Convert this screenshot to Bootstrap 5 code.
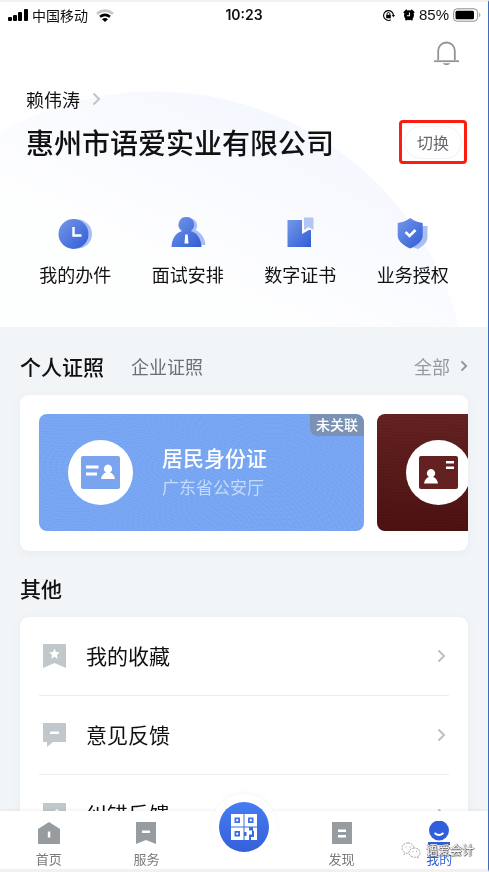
<!DOCTYPE html>
<html lang="zh-CN">
<head>
<meta charset="utf-8">
<meta name="viewport" content="width=device-width, initial-scale=1">
<title>我的</title>
<link href="https://cdn.jsdelivr.net/npm/bootstrap@5.3.0/dist/css/bootstrap.min.css" rel="stylesheet">
<style>
  body { font-family: "Noto Sans CJK SC", "Noto Sans", sans-serif; color: #111; background: #f1f5f8; }
  button { background: none; border: 0; padding: 0; color: inherit; }
  a { color: inherit; text-decoration: none; }
  svg { display: block; flex: none; }
  .shell { border-top: 2px solid #f1f1f1; border-right: 1px solid #3d6fb3; border-bottom: 3px solid #f1f1f1; }
  .scroll-y, .scroll-x { scrollbar-width: none; }
  .scroll-y::-webkit-scrollbar, .scroll-x::-webkit-scrollbar { display: none; }
  .scroll-y { overflow: hidden auto; min-height: 0; }
  .hero { background:
      linear-gradient(205deg, rgba(255,255,255,0) 30%, rgba(255,255,255,.9) 75%),
      radial-gradient(circle 315px at 155px 404px, #f3f6fe 0, #f3f6fe 314px, #fff 315px);
      height: 325px; }
  .status { height: 26px; padding: 0 7px; font-size: 14px; line-height: 26px; }
  .status > * { flex: 1 1 0; }
  .clock { font-family: Inter, sans-serif; font-weight: 600; }
  .percent { font-family: "Liberation Sans", sans-serif; font-size: 15px; }
  .bell-row { height: 48px; padding: 8px 28px 0; }
  .bell-row button { height: 36px; }
  .person { font-size: 18px; line-height: 26px; margin: 10px 26px 0; gap: 12px; }
  .company-row { margin: 8px 21px 0 26px; height: 44px; }
  .company { font-size: 28px; line-height: 40px; font-weight: 500; white-space: nowrap; }
  .frame-red { border: 3px solid #fb1d10; border-radius: 4px; padding: 3px 2px 2px; background: #fff; }
  .pill { width: 58px; height: 33px; border: 1px solid #f1f1f3; border-radius: 17px; font-size: 16px; line-height: 31px; color: #666a70; }
  .actions { margin: 52px 19px 0; font-size: 18px; line-height: 24px; }
  .actions a { gap: 10px; }
  .heading { font-size: 21px; line-height: 30px; font-weight: 500; }
  .tabs { padding: 24px 20px 14px; gap: 27px; }
  .tabs .quiet { font-size: 18px; line-height: 30px; color: #6a6f76; }
  .tabs .pale { color: #989b9e; gap: 10px; }
  .panel { margin: 0 20px; background: #fff; border-radius: 9px; box-shadow: 0 2px 10px rgba(60,80,110,.06); }
  .certs { padding: 19px 0 20px 19px; gap: 13px; overflow: auto hidden; }
  .cert { width: 325px; height: 117px; border-radius: 8px; padding-left: 29px; gap: 29px; flex: none; color: #fff; overflow: hidden; }
  .cert-blue { background:
      repeating-radial-gradient(ellipse at 72% 45%, rgba(60,110,220,.07) 0 1px, transparent 2px 6px),
      repeating-radial-gradient(ellipse at 10% 130%, rgba(60,110,220,.07) 0 1px, transparent 2px 5px), #7aa8f3; }
  .cert-red { background:
      repeating-linear-gradient(2deg, rgba(0,0,0,.05) 0 1px, transparent 1px 3px), linear-gradient(#652222, #4d1111); }
  .disc { width: 65px; height: 65px; border-radius: 50%; background: #fff; flex: none; }
  .cert-name { font-size: 21px; line-height: 28px; font-weight: 500; }
  .cert-org { font-size: 17px; line-height: 32px; color: #c6dbfb; }
  .flag { top: 0; right: 0; width: 54px; height: 22px; border-radius: 0 8px 0 8px; background: #7b92b4; font-size: 14px; line-height: 21px; font-weight: 500; }
  .other { padding: 22px 20px 14px; }
  .menu { padding: 0 19px; border-radius: 9px; }
  .menu a { font-size: 21px; line-height: 30px; height: 79px; border-bottom: 1px solid #ececee; padding: 0 3px 0 4px; gap: 20px; }
  .menu span { padding-bottom: 3px; }
  .menu li:last-child a { border-bottom: 0; }
  .tabbar { height: 58px; background: #fff; box-shadow: 0 -1px 4px rgba(0,0,0,.06); font-size: 13px; line-height: 18px; color: #777b7e; }
  .tabbar > a { flex: 1 1 0; gap: 5px; padding-top: 10px; }
  .tabbar .on { color: #2f5fd9; }
  .tabbar .scan { padding: 0; margin-top: -17px; }
  .halo { width: 66px; height: 66px; border-radius: 50%; background: #fff; box-shadow: 0 -2px 4px rgba(0,0,0,.03); }
  .scan-disc { width: 50px; height: 50px; border-radius: 50%; background: linear-gradient(#467df2, #3460d8); }
  .stamp { right: 14px; bottom: 9px; gap: 5px; font-size: 12px; line-height: 20px; color: #fff; pointer-events: none;
      text-shadow: 0 0 1px #555, 1px 0 1px #555, 0 1px 1px #666; }
</style>
<script src="https://cdn.jsdelivr.net/npm/bootstrap@5.3.0/dist/js/bootstrap.bundle.min.js"></script>
</head>
<body>
<div class="shell vh-100 d-flex flex-column position-relative overflow-hidden">
  <main class="scroll-y flex-fill">
    <header class="hero">
      <div class="status d-flex">
        <div class="d-flex align-items-center">
          <svg width="21" height="12" viewBox="0 0 21 12"><rect x="1" y="8" width="4" height="4" rx="1"/><rect x="6" y="6" width="4" height="6" rx="1"/><rect x="11" y="3" width="4" height="9" rx="1"/><rect x="17" y="0" width="4" height="12" rx="1"/></svg>
          <span class="ms-1">中国移动</span>
          <svg class="ms-2" width="18" height="13" viewBox="0 0 18 13" fill="none"><path d="M1 4.800Q9-1.500 17 4.800" stroke="#c5c5c7" stroke-width="2.600"/><path d="M4 7.800q5-3.800 10 0" stroke="#000" stroke-width="2.600"/><path d="M6 10.200q3-2.300 6 0l-3 2.800z" fill="#000"/></svg>
        </div>
        <div class="clock text-center">10:23</div>
        <div class="d-flex align-items-center justify-content-end">
          <svg width="13" height="13" viewBox="0 0 14 14" fill="none" stroke="#000"><path d="M12.300 7A5.300 5.300 0 1 0 9.500 11.700" stroke-width="1.200"/><path d="M10.500 6.500h3.500l-1.700 2.500z" fill="#000" stroke="none"/><rect x="4.500" y="6.300" width="5" height="3.700" fill="#000" stroke="none"/><path d="M5.500 6.500V5.300a1.500 1.500 0 0 1 3 0v1.200"/></svg>
          <svg class="ms-2" width="12" height="12" viewBox="0 0 14 14"><circle cx="7" cy="7.300" r="5.800"/><path d="M1 4.500 4.500 1M9.500 1 13 4.500M3 13l2-2M11 13l-2-2" stroke="#000" stroke-width="2"/><path d="M7.500 4v4h-3" stroke="#fff" fill="none" stroke-width="1.200"/></svg>
          <span class="percent ms-1">85%</span>
          <svg class="ms-1" width="28" height="14" viewBox="0 0 28 14"><rect x=".6" y=".8" width="24" height="12.400" rx="3.500" fill="#fff" stroke="#8d8d8f"/><rect x="2.500" y="2.700" width="18.500" height="8.600" rx="1.500"/><path d="M26.300 4.500q2 2.500 0 5z" fill="#8d8d8f"/></svg>
        </div>
      </div>
      <div class="bell-row d-flex justify-content-end">
        <button type="button" aria-label="通知"><svg width="27" height="26" viewBox="0 0 27 26" fill="none" stroke="#8f9498"><path d="M5.200 19V9.800a8.300 8.300 0 0 1 16.600 0V19" stroke-width="1.800"/><path d="M1 20.200h25" stroke-width="1.800"/><path d="M9.500 22.300h8q-4 4-8 0z" fill="#8f9498" stroke="none"/></svg></button>
      </div>
      <a href="#" class="person d-flex align-items-center">赖伟涛
        <svg width="9" height="14" viewBox="0 0 9 14" fill="none" stroke="#c0c5c9" stroke-width="2"><path d="m1.500 1.500 5.500 5.500-5.500 5.500"/></svg></a>
      <div class="company-row d-flex align-items-center justify-content-between">
        <h1 class="company m-0">惠州市语爱实业有限公司</h1>
        <div class="frame-red"><button type="button" class="pill d-block">切换</button></div>
      </div>
      <nav class="actions row g-0 text-center">
        <a href="#" class="col-3 d-flex flex-column align-items-center">
          <svg width="36" height="36" viewBox="0 0 36 36"><defs><linearGradient id="blue" x1="0" y1="0" x2="1" y2="1"><stop offset="0" stop-color="#7499e8"/><stop offset="1" stop-color="#315bd6"/></linearGradient></defs><circle cx="20.500" cy="18" r="14.500" fill="#a9bff1"/><circle cx="16.500" cy="18" r="15" fill="url(#blue)"/><path d="M16.500 11v8.500h8" fill="none" stroke="#fff" stroke-width="2.400"/></svg>我的办件</a>
        <a href="#" class="col-3 d-flex flex-column align-items-center">
          <svg width="36" height="36" viewBox="0 0 36 36"><path d="M20 2.500a7 7 0 0 1 5.500 11.500C31.500 17 35 22 35.500 29H20z" fill="#a9bff1"/><path d="M16.300 1a7.700 7.700 0 0 1 4.500 14C27 17 31 22 31.500 31h-30C2 22 6 17 11.800 15A7.700 7.700 0 0 1 16.300 1z" fill="url(#blue)"/><path d="M15.200 18.500h2.500l.8 9h-4z" fill="#fff"/></svg>面试安排</a>
        <a href="#" class="col-3 d-flex flex-column align-items-center">
          <svg width="36" height="36" viewBox="0 0 36 36"><path d="M5.500 4H20v14l7-4h2v17H5.500z" fill="url(#blue)"/><path d="M22 1.500h9.500V14l-4.700-3-4.800 3z" fill="#b3c6f3"/></svg>数字证书</a>
        <a href="#" class="col-3 d-flex flex-column align-items-center">
          <svg width="36" height="36" viewBox="0 0 36 36"><path d="M20 10h12.500v11c0 5-4 9-9.500 12l-6-2z" fill="#a9bff1"/><path d="M15.200 2q5 4 12.500 5v12c0 6-5 10-12.500 13.500C7.700 29 2.700 25 2.700 19V7q7.500-1 12.500-5z" fill="url(#blue)"/><path d="m10.500 16 4 4 6-6" fill="none" stroke="#fff" stroke-width="2.600"/></svg>业务授权</a>
      </nav>
    </header>

    <div class="tabs d-flex">
      <button type="button" class="heading">个人证照</button>
      <button type="button" class="quiet">企业证照</button>
      <a href="#" class="quiet pale ms-auto d-flex align-items-center">全部
        <svg width="8" height="12" viewBox="0 0 8 12" fill="none" stroke="#909396" stroke-width="1.800"><path d="m1.500 1.300 4.700 4.700-4.700 4.700"/></svg></a>
    </div>
    <section class="panel certs scroll-x d-flex">
      <a href="#" class="cert cert-blue position-relative d-flex align-items-center">
        <span class="disc d-flex align-items-center justify-content-center"><svg width="39" height="33" viewBox="0 0 39 33"><rect width="39" height="33" rx="2" fill="#7aa4ee"/><path d="M5 9.500h12.500v3H5zM5 16.500h11v3H5zM20 23q1-5.500 5-6.500a4.200 4.200 0 1 1 4 0q4 1 5 6.500z" fill="#fff"/></svg></span>
        <span><span class="cert-name d-block">居民身份证</span><span class="cert-org d-block">广东省公安厅</span></span>
        <span class="flag position-absolute text-center">未关联</span>
      </a>
      <a href="#" class="cert cert-red d-flex align-items-center" aria-label="证照">
        <span class="disc d-flex align-items-center justify-content-center"><svg width="39" height="33" viewBox="0 0 39 33"><rect width="39" height="33" rx="2" fill="#632221"/><path d="M27 5h8v2.500h-8zM27 10.500h8V13h-8zM5 27.500q1-5.500 5-6.500a4.200 4.200 0 1 1 4 0q4 1 5 6.500z" fill="#fff"/></svg></span>
      </a>
    </section>

    <div class="other"><h2 class="heading m-0">其他</h2></div>
    <ul class="panel menu list-unstyled">
      <li><a href="#" class="d-flex align-items-center">
        <svg width="23" height="24" viewBox="0 0 23 24"><path d="M0 0h23v24l-11.500-5L0 24z" fill="#c1c8cc"/><path d="m11.500 4.500 1.500 3.600 3.800.3-2.900 2.500.9 3.800-3.300-2-3.300 2 .9-3.800-2.900-2.500 3.800-.3z" fill="#fff"/></svg>
        <span class="flex-fill">我的收藏</span>
        <svg width="9" height="14" viewBox="0 0 9 14" fill="none" stroke="#bcc1c5" stroke-width="2"><path d="m1.500 1.500 5.500 5.500-5.500 5.500"/></svg></a></li>
      <li><a href="#" class="d-flex align-items-center">
        <svg width="23" height="24" viewBox="0 0 23 24"><path d="M0 0h23v19H10l-6 5v-5H0z" fill="#c1c8cc"/><path d="M7 8.500h9v2.500H7z" fill="#fff"/></svg>
        <span class="flex-fill">意见反馈</span>
        <svg width="9" height="14" viewBox="0 0 9 14" fill="none" stroke="#bcc1c5" stroke-width="2"><path d="m1.500 1.500 5.500 5.500-5.500 5.500"/></svg></a></li>
      <li><a href="#" class="d-flex align-items-center">
        <svg width="23" height="24" viewBox="0 0 23 24"><path d="M0 0h23v24H0z" fill="#c1c8cc"/><path d="m6 13 8-7 3 3-8 7z" fill="#fff"/></svg>
        <span class="flex-fill">纠错反馈</span>
        <svg width="9" height="14" viewBox="0 0 9 14" fill="none" stroke="#bcc1c5" stroke-width="2"><path d="m1.500 1.500 5.500 5.500-5.500 5.500"/></svg></a></li>
    </ul>
  </main>

  <nav class="tabbar d-flex position-relative flex-shrink-0">
    <a href="#" class="d-flex flex-column align-items-center"><svg width="24" height="24" viewBox="0 0 24 24"><path d="M12 1 23 8v15H1V8z" fill="#969c9f"/><path d="M10.800 10.500h2.500v6h-2.500z" fill="#fff"/></svg>首页</a>
    <a href="#" class="d-flex flex-column align-items-center"><svg width="24" height="24" viewBox="0 0 24 24"><path d="M2 1h20v22l-10-4-10 4z" fill="#969c9f"/><path d="M8 9.500h8V12H8z" fill="#fff"/></svg>服务</a>
    <a href="#" class="scan d-flex flex-column align-items-center" aria-label="扫码"><span class="halo d-flex align-items-center justify-content-center"><span class="scan-disc d-flex align-items-center justify-content-center">
      <svg width="26" height="26" viewBox="0 0 26 26"><path fill="#fff" fill-rule="evenodd" d="M0 0h12.500v12.500H0zM3.500 3.500v5.500h5.500v-5.500zM13.500 0H26v12.500H13.500zM17 3.500v5.500h5.500v-5.500zM0 13.500h12.500V26H0zM3.500 17v5.500h5.500V17zM13.500 13.500h4.500v3h3v4h-3V26h-4.500v-4h2v-4h-2zM22 13.500h4v7.500h-3v-4h-1zM20 23h3v-2h3v5h-6z"/><path fill="#fff" d="M5.200 5.200h2v2h-2zM18.800 5.200h2v2h-2zM5.200 18.800h2v2h-2z"/></svg></span></span></a>
    <a href="#" class="d-flex flex-column align-items-center"><svg width="24" height="24" viewBox="0 0 24 24"><path d="M2 1h20v22H2z" fill="#969c9f"/><path d="M8 8.500h8V11H8zM8 14h8v2.500H8z" fill="#fff"/></svg>发现</a>
    <a href="#" class="on d-flex flex-column align-items-center" aria-current="page"><svg width="24" height="24" viewBox="0 0 24 24"><circle cx="12" cy="9.500" r="10" fill="#315edb"/><path d="M7.500 12q4.500 4 9 0" fill="none" stroke="#fff" stroke-width="1.800"/><path d="M1 21h22v3H1z" fill="#315edb"/></svg>我的</a>
  </nav>

  <div class="stamp position-absolute d-flex align-items-center">
    <svg width="20" height="17" viewBox="0 0 20 17" fill="#fff" stroke="#8b8b8b" stroke-width=".8" stroke-dasharray="2 1"><path d="M7 1C3 1 1 3.500 1 6q0 2.500 2.500 4.200L3 12.500l2.500-1.300q4 .8 6.500-1.700 1.500-2 1-4Q11.500 1 7 1z"/><path d="M13.500 6c-3.500 0-5.500 2.200-5.500 4.700s2.500 4.600 5.500 4.600l2-.3 2 1-.5-1.700q2-1.500 2-3.600C19 8.200 17 6 13.500 6z"/><path d="M5 4.500v1M9 4.500v1M12 9v1M15.500 9v1" stroke-dasharray="none"/></svg>
    <span>语爱会计</span>
  </div>
</div>
</body>
</html>
